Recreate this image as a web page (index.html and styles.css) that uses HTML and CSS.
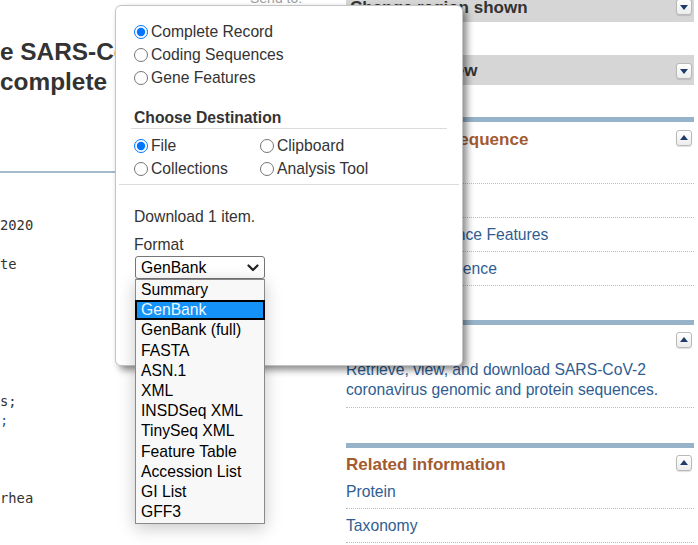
FILE: index.html
```html
<!DOCTYPE html>
<html lang="en">
<head>
<meta charset="utf-8">
<title>Nucleotide record</title>
<link rel="stylesheet" href="styles.css">
</head>
<body>
<div class="page">
  <div class="main">
    <div class="sendto">Send to:</div>
    <h1 class="title"><span>e SARS-CoV-2 isolate Wuhan-Hu-1,</span><span>complete<span class="tail">genome</span></span></h1>
    <div class="rule"></div>
<pre class="record">2020

te






s;
<span class="lnk">;</span>



rhea

</pre>
  </div>
  <aside class="side">
    <div class="bar first"><span>Change region shown</span><span class="tog"><i class="tri down"></i></span></div>
    <div class="bar second"><span>Customize view</span><span class="tog"><i class="tri down"></i></span></div>
    <section class="portlet p1">
      <div class="phead"><h3>Analyze this sequence</h3><span class="tog"><i class="tri up"></i></span></div>
      <ul class="links">
        <li>Run BLAST</li>
        <li>Pick Primers</li>
        <li>Highlight Sequence Features</li>
        <li>Find in this Sequence</li>
      </ul>
    </section>
    <section class="portlet p2">
      <div class="phead"><h3>NCBI Virus</h3><span class="tog"><i class="tri up"></i></span></div>
      <p class="desc">Retrieve, view, and download SARS-CoV-2 coronavirus genomic and protein sequences.</p>
    </section>
    <section class="portlet p3">
      <div class="phead"><h3>Related information</h3><span class="tog"><i class="tri up"></i></span></div>
      <ul class="links">
        <li>Protein</li>
        <li>Taxonomy</li>
      </ul>
    </section>
  </aside>
</div>

<div class="popup">
  <div class="sec1">
    <label class="row"><input type="radio" name="what" checked>Complete Record</label>
    <label class="row"><input type="radio" name="what">Coding Sequences</label>
    <label class="row"><input type="radio" name="what">Gene Features</label>
    <h3 class="dest-h">Choose Destination</h3>
    <div class="dest">
      <label class="row"><input type="radio" name="dest" checked>File</label>
      <label class="row"><input type="radio" name="dest">Clipboard</label>
      <label class="row"><input type="radio" name="dest">Collections</label>
      <label class="row"><input type="radio" name="dest">Analysis Tool</label>
    </div>
  </div>
  <div class="sec2">
    <div class="dl">Download 1 item.</div>
    <div class="fmt">Format</div>
    <div class="selectbox"><span>GenBank</span><svg class="chev" width="12" height="8" viewBox="0 0 12 8"><polyline points="1.5,1.5 6,6 10.5,1.5" fill="none" stroke="#222" stroke-width="2.2" stroke-linecap="round" stroke-linejoin="round"/></svg></div>
  </div>
</div>

<div class="listbox">
  <div class="opt">Summary</div>
  <div class="opt sel">GenBank</div>
  <div class="opt">GenBank (full)</div>
  <div class="opt">FASTA</div>
  <div class="opt">ASN.1</div>
  <div class="opt">XML</div>
  <div class="opt">INSDSeq XML</div>
  <div class="opt">TinySeq XML</div>
  <div class="opt">Feature Table</div>
  <div class="opt">Accession List</div>
  <div class="opt">GI List</div>
  <div class="opt">GFF3</div>
</div>
</body>
</html>
```
FILE: styles.css
```css
* { box-sizing: border-box; }
html, body { margin: 0; padding: 0; }
body {
  width: 698px;
  height: 545px;
  overflow: hidden;
  position: relative;
  background: #fff;
  font-family: "Liberation Sans", Arial, sans-serif;
  color: #333;
}

.page { display: flex; align-items: flex-start; }

.main {
  width: 346px;
  flex: none;
  height: 545px;
  overflow: hidden;
}
.sendto {
  margin-top: -10px;
  height: 16px;
  line-height: 16px;
  padding-left: 250px;
  font-size: 14px;
  color: #a0a0a0;
  white-space: nowrap;
}
.title {
  margin: 31px 0 0;
  font-size: 24.4px;
  line-height: 30px;
  font-weight: bold;
  color: #333;
  white-space: nowrap;
}
.title > span { display: block; }
.title .tail { margin-left: 12px; }
.rule {
  margin-top: 74px;
  height: 2px;
  background: #a3b9cc;
}
.record {
  margin: 43px 0 0;
  font-family: "DejaVu Sans Mono", monospace;
  font-size: 13.8px;
  line-height: 19.5px;
  color: #333;
}
.record .lnk { color: #2f5d92; }

.side {
  width: 348px;
  flex: none;
  font-size: 15.7px;
}
.bar {
  height: 30px;
  background: #d6d6d6;
  display: flex;
  align-items: center;
  justify-content: space-between;
  padding: 0 2px 0 4px;
  font-weight: bold;
  font-size: 17px;
  color: #333;
}
.bar.first { margin-top: -8px; padding-top: 2px; }
.bar.first .tog { margin-top: -2px; }
.bar.second { margin-top: 33px; padding-top: 1px; }

.tog {
  width: 16px;
  height: 16px;
  border: 1px solid #b9b9b9;
  border-radius: 3px;
  background: linear-gradient(#ffffff, #ececec);
  box-shadow: 0 1px 1px rgba(0,0,0,0.12);
  display: flex;
  align-items: center;
  justify-content: center;
  flex: none;
}
.tri {
  width: 0;
  height: 0;
  border-left: 4px solid transparent;
  border-right: 4px solid transparent;
}
.tri.down { border-top: 5px solid #1d3c6b; margin-top: 1px; }
.tri.up { border-bottom: 5px solid #1d3c6b; margin-bottom: 1px; }

.portlet { border-top: 5px solid #97b3ca; }
.p1 { margin-top: 32px; }
.p1 .phead { margin-top: 8px; }
.p2 { margin-top: 34px; }
.p3 { margin-top: 35px; }
.phead {
  margin-top: 7px;
  height: 20px;
  display: flex;
  align-items: center;
  justify-content: space-between;
  padding-right: 2px;
}
.phead .tog { margin-top: -4px; }
.phead h3 {
  margin: 0;
  font-size: 17px;
  line-height: 20px;
  font-weight: bold;
  color: #a35b30;
}
.links { list-style: none; margin: 0; padding: 0; }
.links li {
  line-height: 33px;
  height: 34px;
  border-bottom: 1px dotted #bdbdbd;
  color: #2f5d92;
  white-space: nowrap;
}
.desc {
  margin: 8px 0 0;
  line-height: 20px;
  padding-bottom: 7px;
  border-bottom: 1px dotted #bdbdbd;
  color: #2f5d92;
}

/* popup */
.popup {
  position: absolute;
  left: 115px;
  top: 5px;
  width: 348px;
  height: 361px;
  background: #fff;
  border: 1px solid #c4c4c4;
  border-radius: 6px;
  box-shadow: 4px 4px 7px rgba(0,0,0,0.45);
  padding: 0 3px;
  font-size: 15.7px;
  line-height: 23px;
  color: #333;
  z-index: 5;
}
.sec1 {
  padding: 14px 12px 4px;
  border-bottom: 1px solid #dcdcdc;
}
.row {
  display: flex;
  align-items: center;
  height: 23px;
  padding-left: 3px;
  white-space: nowrap;
}
.row input {
  width: 14px;
  height: 14px;
  margin: 0 3px 0 0;
  flex: none;
}
.dest-h {
  margin: 19px 0 0;
  font-size: 15.7px;
  line-height: 20px;
  font-weight: bold;
  padding-left: 3px;
  border-bottom: 1px solid #dcdcdc;
  color: #333;
}
.dest {
  display: grid;
  grid-template-columns: 126px auto;
  margin-top: 5px;
}
.dest .row { padding-left: 3px; }
.sec2 { padding: 20px 15px 0; }
.dl { line-height: 23px; }
.fmt { margin-top: 7px; line-height: 20px; }
.selectbox {
  margin: 1px 0 0 1px;
  width: 130px;
  height: 23px;
  border: 1px solid #767676;
  border-radius: 3px;
  background: #fff;
  display: flex;
  align-items: center;
  justify-content: space-between;
  padding: 0 5px 0 5px;
  color: #000;
}
.chev { display: block; }

/* open dropdown list */
.listbox {
  position: absolute;
  left: 135px;
  top: 279px;
  width: 130px;
  height: 245px;
  border: 1px solid #8a8a8a;
  background: #f8f8f8;
  box-shadow: 0 4px 16px rgba(0,0,0,0.22);
  font-size: 15.7px;
  color: #000;
  z-index: 10;
}
.opt {
  height: 20.2px;
  line-height: 20.2px;
  padding-left: 5px;
  white-space: nowrap;
}
.opt.sel {
  margin: 0 -1px;
  padding-left: 6px;
  background: #1592f7;
  color: #eef6ff;
  box-shadow: inset 0 0 0 2px #000;
}
```
